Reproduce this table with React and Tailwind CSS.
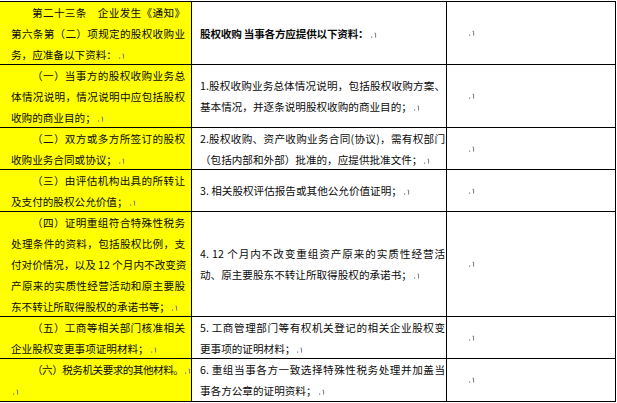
import React from "react";

function Mark({ className = "" }) {
  return (
    <svg
      width="6"
      height="6"
      viewBox="0 0 6 6"
      className={"inline-block align-baseline ml-[2px] " + className}
    >
      <rect x="0" y="4.5" width="1.2" height="1.2" fill="#7a7a8a" />
      <path d="M3.5 1.2 H4.6 V5.6" stroke="#7a7a8a" strokeWidth="1" fill="none" />
    </svg>
  );
}

function L({ children, full = true, indent = false, tight = false }) {
  return (
    <div
      className={
        (full ? "[text-align-last:justify] text-justify " : "") +
        (indent ? "indent-[21px] " : "") +
        (tight ? "tracking-[-0.5px] " : "") +
        "whitespace-nowrap"
      }
    >
      {children}
    </div>
  );
}

const rows = [
  {
    left: [
      { t: "第二十三条　企业发生《通知》", indent: true },
      { t: "第六条第（二）项规定的股权收购业" },
      { t: "务，应准备以下资料：", end: true },
    ],
    mid: [{ t: "股权收购 当事各方应提供以下资料：", end: true, bold: true }],
  },
  {
    left: [
      { t: "（一）当事方的股权收购业务总", indent: true },
      { t: "体情况说明，情况说明中应包括股权" },
      { t: "收购的商业目的；", end: true },
    ],
    mid: [
      { t: "1.股权收购业务总体情况说明，包括股权收购方案、" },
      { t: "基本情况，并逐条说明股权收购的商业目的；", end: true },
    ],
  },
  {
    left: [
      { t: "（二）双方或多方所签订的股权", indent: true },
      { t: "收购业务合同或协议；", end: true },
    ],
    mid: [
      { t: "2.股权收购、资产收购业务合同(协议)，需有权部门" },
      { t: "（包括内部和外部）批准的，应提供批准文件；", end: true },
    ],
  },
  {
    left: [
      { t: "（三）由评估机构出具的所转让", indent: true },
      { t: "及支付的股权公允价值；", end: true },
    ],
    mid: [{ t: "3. 相关股权评估报告或其他公允价值证明；", end: true }],
  },
  {
    left: [
      { t: "（四）证明重组符合特殊性税务", indent: true },
      { t: "处理条件的资料，包括股权比例，支" },
      { t: "付对价情况，以及 12 个月内不改变资" },
      { t: "产原来的实质性经营活动和原主要股" },
      { t: "东不转让所取得股权的承诺书等；", end: true },
    ],
    mid: [
      { t: "4. 12 个月内不改变重组资产原来的实质性经营活" },
      { t: "动、原主要股东不转让所取得股权的承诺书；", end: true },
    ],
  },
  {
    left: [
      { t: "（五）工商等相关部门核准相关", indent: true },
      { t: "企业股权变更事项证明材料；", end: true },
    ],
    mid: [
      { t: "5. 工商管理部门等有权机关登记的相关企业股权变" },
      { t: "更事项的证明材料；", end: true },
    ],
  },
  {
    left: [
      { t: "（六）税务机关要求的其他材料。", indent: true, end: true, tight: true },
      { t: "", end: true },
    ],
    mid: [
      { t: "6. 重组当事各方一致选择特殊性税务处理并加盖当" },
      { t: "事各方公章的证明资料；", end: true },
    ],
  },
];

function Lines({ lines }) {
  return lines.map((l, i) => (
    <L key={i} full={!l.end} indent={!!l.indent} tight={!!l.tight}>
      {l.bold ? <span className="font-bold tracking-[-0.2px]">{l.t}</span> : l.t}
      {l.end && <Mark />}
    </L>
  ));
}

export default function App() {
  return (
    <div className="w-[617px] h-[403px] bg-white overflow-hidden">
      <div
        className="ml-[-1px] mt-px w-[617px] grid grid-cols-[191px_254px_168px] grid-rows-[62px_62px_41px_41px_104px_41px_42px] gap-px bg-black border border-black text-[10.6px] leading-[21px] text-[#0a0a0a]"
        style={{ fontFamily: '"Noto Sans CJK SC", "Noto Sans", sans-serif' }}
      >
        {rows.map((r, i) => (
          <React.Fragment key={i}>
            <div className="bg-[#ffff00] pl-[11px] pr-[6px] flex flex-col justify-center overflow-visible">
              <Lines lines={r.left} />
            </div>
            <div className="bg-white pl-[8px] pr-[1px] flex flex-col justify-center">
              <Lines lines={r.mid} />
            </div>
            <div className="bg-white pl-[20px] flex items-center">
              <Mark className="ml-0" />
            </div>
          </React.Fragment>
        ))}
      </div>
    </div>
  );
}
